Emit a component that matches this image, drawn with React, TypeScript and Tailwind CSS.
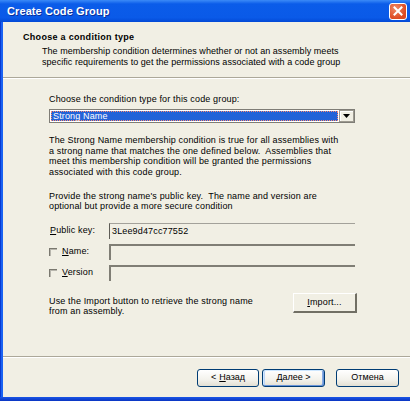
import React from "react";

const font = { fontFamily: '"Liberation Sans", Arial, sans-serif' };

function XpButton({
  children,
  primary,
  className = "",
}: {
  children: React.ReactNode;
  primary?: boolean;
  className?: string;
}) {
  return (
    <div
      className={`flex h-[18px] items-center justify-center rounded-[3px] border border-[#003c74] bg-[linear-gradient(to_bottom,#ffffff,#f3f2ec_60%,#e2dfd3)] text-[9px] text-black ${
        primary ? "shadow-[inset_1px_1px_0_#cee7ff,inset_-1px_-1px_0_#6a94d8,inset_2px_0_0_#bcd4f6,inset_-2px_0_0_#89ade4]" : ""
      } ${className}`}
    >
      {children}
    </div>
  );
}

function Field({ value, thick }: { value?: string; thick?: boolean }) {
  return (
    <div
      className={`flex h-[16px] w-[246px] items-center bg-[#f1efe4] pl-[2px] text-[9px] text-black ${
        thick
          ? "border-t-2 border-l-2 border-t-[#807e75] border-l-[#807e75]"
          : "border-t border-l border-t-[#a3a19a] border-l-[#5e5c56]"
      }`}
    >
      {value}
    </div>
  );
}

function Check() {
  return (
    <div className="h-[8px] w-[8px] border-t border-l border-[#7a786f] bg-[#f1efe4] shadow-[inset_1px_1px_0_#b8b6ad]" />
  );
}

export default function App() {
  return (
    <div
      className="flex h-[401px] w-[410px] flex-col overflow-hidden bg-[#f1efe4]"
      style={font}
    >
      {/* title bar */}
      <div className="flex h-[22px] shrink-0 items-center justify-between bg-[linear-gradient(to_bottom,#3b8af7_0%,#0b5ce9_18%,#0a5ae8_80%,#0349d6_100%)] pl-[7px] pr-[3px]">
        <span className="text-[11px] font-bold tracking-[0.1px] text-white [text-shadow:1px_1px_0_#0a2f9a]">
          Create Code Group
        </span>
        <div className="flex h-[17px] w-[18px] items-center justify-center rounded-[3px] border border-white bg-[radial-gradient(circle_at_35%_30%,#f08a66,#dd4a22_70%)]">
          <svg width="10" height="10" viewBox="0 0 10 10">
            <path d="M1.5 1.5 L8.5 8.5 M8.5 1.5 L1.5 8.5" stroke="white" strokeWidth="2" strokeLinecap="square" />
          </svg>
        </div>
      </div>

      <div className="flex flex-1">
        {/* left frame */}
        <div className="w-[3px] shrink-0 border-l border-[#0a3ad0] bg-[#1a62f2]" />

        <div className="flex flex-1 flex-col">
          {/* header */}
          <div className="h-[55px] shrink-0 pt-[10px]">
            <div className="pl-[20px] text-[9px] font-bold leading-[11px] tracking-[0.3px] text-black">
              Choose a condition type
            </div>
            <div className="mt-[3px] pl-[39px] text-[9px] leading-[11px] tracking-[0.05px] text-black">
              <div>The membership condition determines whether or not an assembly meets</div>
              <div>specific requirements to get the permissions associated with a code group</div>
            </div>
          </div>
          <div className="h-px shrink-0 bg-[#aca899]" />
          <div className="h-px shrink-0 bg-white" />

          {/* body */}
          <div className="flex-1 pl-[46px] pt-[15px] text-[9px] tracking-[0.15px] text-black">
            <div className="leading-[11px]">Choose the condition type for this code group:</div>

            <div className="mt-[4px] flex h-[14px] w-[306px] border border-[#7f7d76] bg-white">
              <div className="m-px flex flex-1 items-center bg-[#2363d8] pl-[2px] leading-[10px] text-white outline-1 -outline-offset-1 outline-dotted outline-[#ff8c6e]">
                Strong Name
              </div>
              <div className="flex w-[15px] items-center justify-center border border-[#9d9a90] bg-[#f1efe4] shadow-[inset_1px_1px_0_#ffffff]">
                <svg width="7" height="4" viewBox="0 0 7 4">
                  <path d="M0 0 H7 L3.5 4 Z" fill="black" />
                </svg>
              </div>
            </div>

            <div className="mt-[12px] w-[310px] whitespace-pre leading-[10.7px]">
              <div>The Strong Name membership condition is true for all assemblies with</div>
              <div>a strong name that matches the one defined below.  Assemblies that</div>
              <div>meet this membership condition will be granted the permissions</div>
              <div>associated with this code group.</div>
            </div>

            <div className="mt-[13px] whitespace-pre leading-[10.5px]">
              <div>Provide the strong name's public key.  The name and version are</div>
              <div>optional but provide a more secure condition</div>
            </div>

            <div className="mt-[11px] flex items-center">
              <div className="w-[60px] pl-px">
                <span className="underline">P</span>ublic key:
              </div>
              <Field value="3Lee9d47cc77552" />
            </div>
            <div className="mt-[5px] flex items-center">
              <div className="flex w-[60px] items-center">
                <Check />
                <span className="ml-[5px]">
                  <span className="underline">N</span>ame:
                </span>
              </div>
              <Field thick />
            </div>
            <div className="mt-[5px] flex items-center">
              <div className="flex w-[60px] items-center">
                <Check />
                <span className="ml-[5px]">
                  <span className="underline">V</span>ersion
                </span>
              </div>
              <Field thick />
            </div>

            <div className="mt-[12px] flex w-[308px] items-start justify-between">
              <div className="pt-[3px] leading-[10px]">
                <div>Use the Import button to retrieve the strong name</div>
                <div>from an assembly.</div>
              </div>
              <div className="flex h-[20px] w-[64px] items-center justify-center border-t border-l border-r-2 border-b-2 border-t-white border-l-white border-r-[#716f64] border-b-[#716f64]">
                <span>
                  <span className="underline">I</span>mport...
                </span>
              </div>
            </div>
          </div>

          {/* footer */}
          <div className="h-px shrink-0 bg-[#aca899]" />
          <div className="h-px shrink-0 bg-white" />
          <div className="flex h-[39px] shrink-0 items-start justify-end pr-[11px] pt-[11px]">
            <XpButton className="w-[62px]">
              &lt; <span className="ml-[3px] underline">Н</span>азад
            </XpButton>
            <XpButton primary className="ml-[3px] w-[63px]">
              <span className="underline">Д</span>алее &gt;
            </XpButton>
            <XpButton className="ml-[11px] w-[63px]">Отмена</XpButton>
          </div>
        </div>
      </div>

      {/* bottom frame */}
      <div className="h-[4px] shrink-0 bg-[linear-gradient(to_bottom,#1a55e6,#0a35c2)]" />
    </div>
  );
}
